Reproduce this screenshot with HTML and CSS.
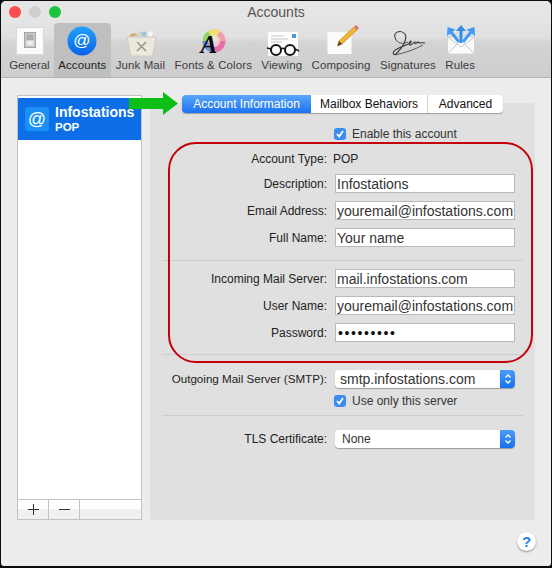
FILE: index.html
```html
<!DOCTYPE html>
<html lang="en">
<head>
  <meta charset="UTF-8">
  <title>Accounts</title>
  <link rel="stylesheet" href="styles.css">
</head>
<body>
  <div class="window">
    <div class="titlebar">
      <div class="lights">
        <span class="light red"></span>
        <span class="light grey"></span>
        <span class="light green"></span>
      </div>
      <div class="title">Accounts</div>
    </div>

    <div class="toolbar">
      <div class="tool">
        <svg class="tool-icon" viewBox="0 0 36 34">
          <rect x="5.5" y="4.5" width="27" height="27" fill="#fbfbfb" stroke="#d8d8d8"/>
          <rect x="13.5" y="9.5" width="11" height="15" fill="#c9c9c9" stroke="#a5a5a5"/>
          <rect x="15.5" y="11.5" width="7" height="6" fill="#adadad"/>
          <rect x="15.5" y="17.5" width="7" height="5" fill="#ececec"/>
        </svg>
        <span>General</span>
      </div>
      <div class="tool active">
        <svg class="tool-icon" viewBox="0 0 36 34">
          <defs>
            <linearGradient id="blue-ball" x1="0" y1="0" x2="0" y2="1">
              <stop offset="0" stop-color="#1fa2ff"/>
              <stop offset="1" stop-color="#0a62e8"/>
            </linearGradient>
          </defs>
          <circle cx="18" cy="18" r="14.5" fill="url(#blue-ball)"/>
          <text x="18" y="23" class="at-glyph" font-size="17">@</text>
        </svg>
        <span>Accounts</span>
      </div>
      <div class="tool">
        <svg class="tool-icon" viewBox="0 0 36 34">
          <path d="M7 14 C9 9 13 9 15 11 C18 7 21 9 23 10 C26 7 31 9 32 14Z" fill="#d8d4cc"/>
          <path d="M8 13 C10 10 13 10 15 12 L8 14Z" fill="#d9a35a"/>
          <circle cx="22" cy="11" r="2.5" fill="#9cc4de"/>
          <circle cx="28" cy="11" r="2.8" fill="#f4f4f4"/>
          <path d="M5 14 L34 14 L30.5 33 L9 33Z" fill="#ebe8dc" stroke="#d0cdc2"/>
          <path d="M15 19 L24 28 M24 19 L15 28" stroke="#9a978c" stroke-width="1.6"/>
        </svg>
        <span>Junk Mail</span>
      </div>
      <div class="tool">
        <svg class="tool-icon" viewBox="0 0 36 34">
          <path d="M19 18 L19 6.5 A11.5 11.5 0 0 1 30.5 18Z" fill="#f0a0a8"/>
          <path d="M19 18 L30.5 18 A11.5 11.5 0 0 1 19 29.5Z" fill="#e86fa8"/>
          <path d="M19 18 L19 29.5 A11.5 11.5 0 0 1 7.5 18Z" fill="#6f8fe0"/>
          <path d="M19 18 L7.5 18 A11.5 11.5 0 0 1 19 6.5Z" fill="#8fd66a"/>
          <path d="M19 18 L13 8 A11.5 11.5 0 0 1 25 8Z" fill="#f0e070"/>
          <circle cx="19" cy="18" r="6" fill="#f2f0ea" opacity="0.7"/>
          <text x="14" y="30" class="a-glyph" font-size="25">A</text>
        </svg>
        <span>Fonts &amp; Colors</span>
      </div>
      <div class="tool">
        <svg class="tool-icon" viewBox="0 0 36 34">
          <rect x="4" y="9" width="30" height="24" fill="#fcfcfc"/>
          <path d="M7 13 H20 M7 16 H24 M7 19 H18" stroke="#c8c8c8"/>
          <rect x="28" y="11" width="4" height="4" fill="#4d9ad8"/>
          <circle cx="12" cy="27" r="5" fill="none" stroke="#161616" stroke-width="2"/>
          <circle cx="26" cy="27" r="5" fill="none" stroke="#161616" stroke-width="2"/>
          <path d="M17 26 Q19 24.5 21 26 M7 26 L3 25 M31 26 L35 28" fill="none" stroke="#161616" stroke-width="1.5"/>
        </svg>
        <span>Viewing</span>
      </div>
      <div class="tool">
        <svg class="tool-icon" viewBox="0 0 36 34">
          <rect x="4.5" y="9" width="24" height="22" fill="#fbfbfb"/>
          <path d="M14.5 23 L16 18 L31 4 L34 7 L19 21Z" fill="#f2b632" stroke="#a8781c" stroke-width="0.6"/>
          <path d="M14.5 23 L16 18 L19 21Z" fill="#55452f"/>
          <path d="M31 4 L33 2 L36 5 L34 7Z" fill="#d9707c"/>
        </svg>
        <span>Composing</span>
      </div>
      <div class="tool">
        <svg class="tool-icon" viewBox="0 0 36 34">
          <path d="M6 17 C1 9 11 6 15 11 C18 16 12 25 7 30 C3 34 1 29 7 26 C14 22 19 22 21 19 C22 17 19 18 19 21 C20 24 23 19 25 19 C24 22 27 20 28 19 C29 21 32 19 35 20" fill="none" stroke="#3a3a3a" stroke-width="1.1"/>
          <path d="M6 17 C9 21 14 21 18 19 M5 32 C14 30 24 27 33 22" fill="none" stroke="#3a3a3a" stroke-width="0.8"/>
        </svg>
        <span>Signatures</span>
      </div>
      <div class="tool">
        <svg class="tool-icon" viewBox="0 0 36 34">
          <rect x="5.5" y="14" width="27" height="17" fill="#fafafa" stroke="#d4d4d4"/>
          <path d="M5.5 14 L19 24 L32.5 14 M5.5 31 L15 21 M32.5 31 L23 21" fill="none" stroke="#c8c8c8"/>
          <path d="M19 20 V7" stroke="#2f8fe8" stroke-width="3" fill="none"/>
          <path d="M14 8 L19 2 L24 8Z" fill="#2f8fe8"/>
          <path d="M17 19 Q13 14 9 9 M21 19 Q25 14 29 9" stroke="#3f9cf0" stroke-width="3" fill="none"/>
          <path d="M5 13 L5.5 4 L13.5 6.5Z M33 13 L32.5 4 L24.5 6.5Z" fill="#3f9cf0"/>
        </svg>
        <span>Rules</span>
      </div>
    </div>

    <div class="content">
      <div class="sidebar">
        <div class="account-list">
          <div class="account selected">
            <svg class="account-icon" viewBox="0 0 24 24">
              <rect width="24" height="24" rx="3" fill="#1a90f5"/>
              <text x="12" y="18" class="at-glyph" font-size="18">@</text>
            </svg>
            <div class="account-text">
              <div class="account-name">Infostations</div>
              <div class="account-type">POP</div>
            </div>
          </div>
        </div>
        <div class="list-buttons">
          <div class="list-btn">
            <svg width="11" height="11" viewBox="0 0 11 11"><path d="M5.5 0 V11 M0 5.5 H11" stroke="#333"/></svg>
          </div>
          <div class="list-btn">
            <svg width="11" height="11" viewBox="0 0 11 11"><path d="M0 5.5 H11" stroke="#333"/></svg>
          </div>
          <div class="list-rest"></div>
        </div>
      </div>

      <div class="details">
        <div class="tabs">
          <div class="tab on">Account Information</div>
          <div class="tab mid">Mailbox Behaviors</div>
          <div class="tab last">Advanced</div>
        </div>

        <div class="panel">
          <div class="row short">
            <span></span>
            <label class="check">
              <span class="box"><svg width="10" height="10" viewBox="0 0 10 10"><path d="M2 5 L4.2 7.5 L8 2" fill="none" stroke="#fff" stroke-width="1.8"/></svg></span>
              Enable this account
            </label>
          </div>
          <div class="row short">
            <label>Account Type:</label>
            <span class="plain">POP</span>
          </div>
          <div class="row">
            <label>Description:</label>
            <input class="field" type="text" value="Infostations">
          </div>
          <div class="row">
            <label>Email Address:</label>
            <input class="field" type="text" value="youremail@infostations.com">
          </div>
          <div class="row">
            <label>Full Name:</label>
            <input class="field" type="text" value="Your name">
          </div>

          <div class="divider first"></div>

          <div class="row">
            <label>Incoming Mail Server:</label>
            <input class="field" type="text" value="mail.infostations.com">
          </div>
          <div class="row">
            <label>User Name:</label>
            <input class="field" type="text" value="youremail@infostations.com">
          </div>
          <div class="row">
            <label>Password:</label>
            <input class="field secret" type="password" value="infostati">
          </div>

          <div class="divider second"></div>

          <div class="row tight">
            <label class="narrow">Outgoing Mail Server (SMTP):</label>
            <div class="popup">
              <span class="popup-value big">smtp.infostations.com</span>
              <span class="stepper"><svg width="8" height="12" viewBox="0 0 8 12"><path d="M1.5 4.5 L4 2 L6.5 4.5 M1.5 7.5 L4 10 L6.5 7.5" fill="none" stroke="#fff" stroke-width="1.3"/></svg></span>
            </div>
          </div>
          <div class="row tight">
            <span></span>
            <label class="check">
              <span class="box"><svg width="10" height="10" viewBox="0 0 10 10"><path d="M2 5 L4.2 7.5 L8 2" fill="none" stroke="#fff" stroke-width="1.8"/></svg></span>
              Use only this server
            </label>
          </div>

          <div class="divider third"></div>

          <div class="row tight">
            <label>TLS Certificate:</label>
            <div class="popup">
              <span class="popup-value">None</span>
              <span class="stepper"><svg width="8" height="12" viewBox="0 0 8 12"><path d="M1.5 4.5 L4 2 L6.5 4.5 M1.5 7.5 L4 10 L6.5 7.5" fill="none" stroke="#fff" stroke-width="1.3"/></svg></span>
            </div>
          </div>
        </div>
      </div>
    </div>

    <div class="footer">
      <div class="help">?</div>
    </div>

    <!-- annotations on top of the screenshot -->
    <svg class="green-arrow" width="49" height="23" viewBox="0 0 49 23">
      <path d="M0 6 H34 V0 L49 11.5 L34 23 V17 H0Z" fill="#0cbf16"/>
    </svg>
    <div class="red-box"></div>
  </div>
</body>
</html>
```

FILE: styles.css
```css
* {
  box-sizing: border-box;
}

html, body {
  margin: 0;
  height: 568px;
  overflow: hidden;
}

body {
  padding: 1px 1px 2px 1px;
  background-color: #0c0c0c;
  font-family: "Liberation Sans", Arial, sans-serif;
  font-size: 12px;
  color: #222;
}

.window {
  position: relative;
  height: 565px;
  background-color: #ececec;
  border-radius: 5px 5px 3px 3px;
  overflow: hidden;
}

.titlebar {
  position: relative;
  height: 22px;
  background-color: #e5e5e5;
}

.lights {
  display: flex;
  gap: 8px;
  padding: 5px 0 0 8px;
}

.light {
  width: 12px;
  height: 12px;
  border-radius: 50%;
}

.red { background-color: #fb4d4b; }
.grey { background-color: #cfcfcf; }
.green { background-color: #1fc43c; }

.title {
  position: absolute;
  top: 0;
  left: 0;
  right: 0;
  line-height: 23px;
  text-align: center;
  font-size: 14px;
  color: #555;
}

.toolbar {
  display: flex;
  height: 55px;
  padding-left: 3.5px;
  background: linear-gradient(#e3e3e3 0, #e0e0e0 14px, #d3d3d3 20px, #cdcdcd 100%);
  border-bottom: 1px solid #b4b4b4;
}

.tool {
  display: flex;
  flex-direction: column;
  align-items: center;
  padding: 0 4.7px;
  font-size: 11.5px;
  letter-spacing: 0.1px;
  color: #3c3c3c;
  white-space: nowrap;
}

.tool:first-child {
  margin-right: -0.6px;
  letter-spacing: -0.1px;
}

.tool.active {
  background-color: #bfbfbf;
  border-radius: 4px 4px 0 0;
  color: #222;
}

.tool-icon {
  width: 36px;
  height: 34px;
  margin: 0 -10px 2px;
  flex-shrink: 0;
  overflow: visible;
}

.at-glyph {
  font-family: "Liberation Sans", sans-serif;
  fill: #fff;
  text-anchor: middle;
}

.a-glyph {
  font-family: "Liberation Serif", serif;
  font-weight: bold;
  font-style: italic;
  fill: #0a0a0a;
  text-anchor: middle;
}

.content {
  display: flex;
  gap: 8px;
  height: 442px;
  padding: 17px 16px 0 16px;
}

.sidebar {
  display: flex;
  flex-direction: column;
  width: 125px;
  border: 1px solid #c2c2c2;
  background-color: #fff;
}

.account-list {
  flex: 1;
  padding-top: 2px;
}

.account {
  display: flex;
  align-items: center;
  gap: 6px;
  height: 42px;
  padding-left: 7px;
}

.selected {
  background-color: #0d6fe8;
  color: #fff;
}

.account-icon {
  width: 24px;
  height: 24px;
  flex-shrink: 0;
}

.account-name {
  font-size: 14px;
  font-weight: bold;
  line-height: 15px;
}

.account-type {
  font-size: 11.5px;
  font-weight: bold;
  line-height: 14px;
}

.list-buttons {
  display: flex;
  height: 20px;
  border-top: 1px solid #c2c2c2;
  background: linear-gradient(#fff 50%, #f1f1f1 50%);
}

.list-btn {
  display: flex;
  align-items: center;
  justify-content: center;
  width: 31px;
  border-right: 1px solid #c2c2c2;
}

.list-rest {
  flex: 1;
}

.details {
  flex: 1;
  display: flex;
  flex-direction: column;
}

.tabs {
  position: relative;
  z-index: 1;
  display: flex;
  align-self: flex-start;
  height: 18px;
  margin: 0 0 -10px 32px;
  background-color: #fff;
  border-radius: 4px;
  box-shadow: 0 1px 1px rgba(0, 0, 0, 0.3);
}

.tab {
  line-height: 18px;
  text-align: center;
  color: #111;
}

.tab.on {
  width: 129px;
  background: linear-gradient(#5aa6fb, #1a72f0);
  border-radius: 4px 0 0 4px;
  color: #fff;
}

.tab.mid {
  width: 117px;
  border-right: 1px solid #cfcfcf;
}

.tab.last {
  width: 75px;
}

.panel {
  flex: 1;
  padding: 21px 12px 0 12px;
  background-color: #e0e0e0;
  border-radius: 3px;
}

.row {
  display: grid;
  grid-template-columns: 165px 180px;
  column-gap: 8px;
  align-items: center;
  min-height: 19px;
  margin-bottom: 8px;
}

.row.short {
  margin-bottom: 6px;
}

.row > label {
  text-align: right;
  color: #222;
}

.row > .narrow {
  font-size: 11.6px;
}

.row.tight {
  margin-bottom: 3px;
}

.row > .check {
  display: flex;
  align-items: center;
  gap: 6px;
  margin-left: -1px;
  text-align: left;
  color: #333;
}

.box {
  display: flex;
  align-items: center;
  justify-content: center;
  width: 12px;
  height: 12px;
  background-color: #3b8df0;
  border-radius: 3px;
}

.plain {
  margin-left: -2px;
  color: #222;
}

.field {
  width: 180px;
  height: 19px;
  padding: 0 0 0 1px;
  margin: 0;
  border: 1px solid #b9b9b9;
  border-radius: 0;
  outline: none;
  background-color: #fff;
  font-family: "Liberation Sans", Arial, sans-serif;
  font-size: 14px;
  color: #333;
}

.field.secret {
  padding-left: 2px;
  letter-spacing: 1.6px;
  color: #111;
}

.divider {
  height: 1px;
  background-color: #cdcdcd;
}

.divider.first {
  margin: 13px 0 8px;
}

.divider.second {
  margin: 12px 0 14px;
}

.divider.third {
  margin: 5px 0 13px;
}

.popup {
  display: flex;
  justify-content: space-between;
  height: 18px;
  background-color: #fff;
  border-radius: 4px;
  box-shadow: 0 1px 1px rgba(0, 0, 0, 0.3);
  overflow: hidden;
}

.popup-value {
  padding-left: 7px;
  line-height: 18px;
  font-size: 12px;
  color: #333;
}

.popup-value.big {
  padding-left: 5px;
  font-size: 14px;
}

.stepper {
  display: flex;
  align-items: center;
  justify-content: center;
  width: 15px;
  background: linear-gradient(#4a9dfa, #1670ee);
}

.footer {
  display: flex;
  justify-content: flex-end;
  padding: 12px 15px 0 0;
}

.help {
  width: 19px;
  height: 19px;
  border-radius: 50%;
  background-color: #fff;
  box-shadow: 0 1px 2px rgba(0, 0, 0, 0.4);
  line-height: 19px;
  text-align: center;
  font-size: 15px;
  font-weight: bold;
  color: #2f80e8;
}

.green-arrow {
  position: absolute;
  left: 128px;
  top: 91px;
}

.red-box {
  position: absolute;
  left: 167px;
  top: 141px;
  width: 365px;
  height: 221px;
  border: 2.5px solid #c4000a;
  border-radius: 28px;
  pointer-events: none;
}
```
